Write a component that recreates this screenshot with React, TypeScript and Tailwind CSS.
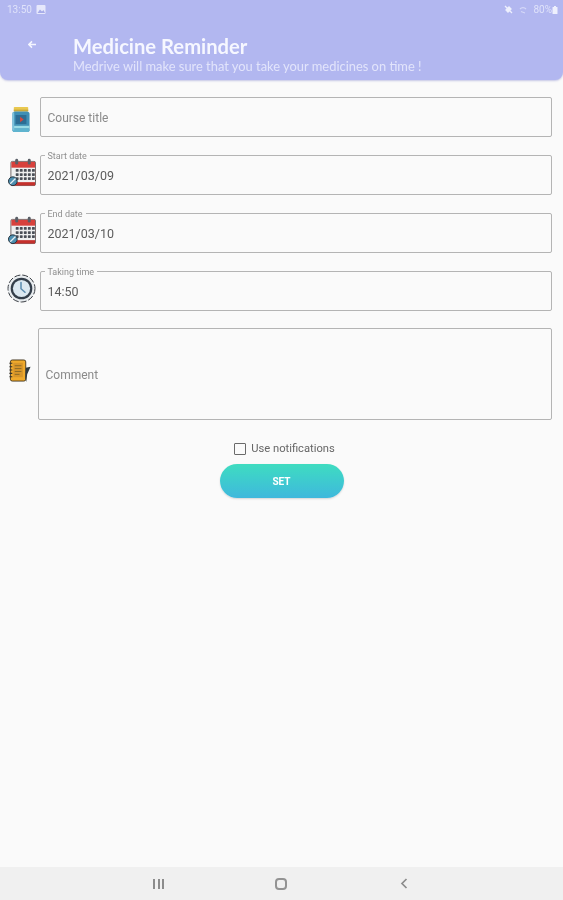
import React from "react";

function JarIcon() {
  return (
    <svg width="20" height="27" viewBox="0 0 22 30" className="ml-[3px] mt-[3px] shrink-0">
      <rect x="3" y="1" width="16" height="5" rx="1" fill="#e9c84f" />
      <rect x="3" y="4" width="16" height="2" fill="#c9a93c" />
      <rect x="1.5" y="6" width="19" height="23" rx="3" fill="#3f8fb5" />
      <rect x="1.5" y="22" width="19" height="3" fill="#9adbe6" />
      <rect x="1.5" y="25" width="19" height="4" rx="2" fill="#5fb4cf" />
      <rect x="5" y="10" width="12" height="10" fill="#2c6d94" />
      <path d="M10 12l4 3-4 3z" fill="#d9463a" />
      <rect x="1.5" y="7" width="2" height="20" fill="#7cc2dc" />
    </svg>
  );
}

function CalendarIcon() {
  const dots = [];
  for (let r = 0; r < 3; r++) {
    for (let c = 0; c < 5; c++) {
      dots.push(<rect key={`${r}-${c}`} x={8 + c * 4.2} y={11.5 + r * 4.2} width="3" height="2.8" rx="0.6" fill="#4a4e56" />);
    }
  }
  return (
    <svg width="28" height="29" viewBox="0 0 29 30" className="-mt-[3px] shrink-0">
      <rect x="3" y="3.5" width="25.500" height="25" rx="1.5" fill="#f0f0f0" stroke="#3a2a2a" strokeWidth="0.7" />
      <rect x="3.500" y="4" width="24.500" height="6" fill="#d8413c" />
      <rect x="3.500" y="25" width="24.500" height="3.500" fill="#c4302c" />
      <rect x="7.500" y="0.800" width="3" height="6" rx="1.5" fill="#5a5f67" />
      <rect x="20.500" y="0.800" width="3" height="6" rx="1.5" fill="#5a5f67" />
      {dots}
      <circle cx="5" cy="24" r="4.500" fill="#4d8fb0" stroke="#23303a" strokeWidth="1" />
      <path d="M2.300 26.700l5.500-5.500" stroke="#e6eef2" strokeWidth="1.300" />
    </svg>
  );
}

function ClockIcon() {
  return (
    <svg width="29" height="29" viewBox="0 0 29 29" className="-ml-[1px] -mt-[3px] shrink-0">
      <circle cx="14.5" cy="14.5" r="13.5" fill="#e8ecef" stroke="#3a3e44" strokeWidth="1" strokeDasharray="6 2" />
      <circle cx="14.5" cy="14.5" r="10.8" fill="#333e4a" />
      <circle cx="14.5" cy="14.5" r="8.6" fill="#dbe8f1" />
      <path d="M14 8.500v6.200l4 3.500" fill="none" stroke="#5a8bae" strokeWidth="1.500" strokeLinecap="round" />
    </svg>
  );
}

function NotebookIcon() {
  return (
    <svg width="22" height="24" viewBox="0 0 22 25" className="shrink-0">
      <rect x="1" y="1" width="16" height="22" rx="2" fill="#efaa2c" stroke="#3a2c12" strokeWidth="0.9" />
      <rect x="4" y="4" width="10" height="15" fill="#d8962a" />
      <path d="M5.500 7h7M5.500 10h7M5.500 13h7M5.500 16h5" stroke="#8a6a26" strokeWidth="1" />
      <path d="M0 4.500h3M0 8h3M0 11.500h3M0 15h3M0 18.500h3" stroke="#33302c" strokeWidth="1.100" />
      <path d="M17 9l5-1-3.500 8-1 8-1-4z" fill="#2f3a40" />
    </svg>
  );
}

function Field({ icon, label, value }: { icon: React.ReactNode; label?: string; value: string }) {
  return (
    <div className="flex h-10">
      <div className="flex w-10 shrink-0 items-start pl-2 pt-[6px]">{icon}</div>
      <div className="relative flex h-10 flex-1 items-center rounded-[2px] border-[1.500px] border-[#b4b4b4] px-[6.500px] pt-[2px]">
        {label && (
          <span className="absolute left-[3.500px] top-[-5px] bg-[#fafafa] px-[3px] text-[9px] leading-[11px] text-[#8f8f8f]">
            {label}
          </span>
        )}
        {label ? (
          <span className="text-[12.500px] text-[#5c5c5c]">{value}</span>
        ) : (
          <span className="text-[12px] text-[#8a8a8a]">{value}</span>
        )}
      </div>
    </div>
  );
}

export default function App() {
  return (
    <div className="flex h-[900px] w-[563px] flex-col overflow-hidden bg-[#fafafa] font-['Roboto',sans-serif] blur-[0.5px]">
      <header className="flex h-20 shrink-0 flex-col rounded-b-[8px] bg-[#b2b7f0] shadow-[0_1px_2px_rgba(120,125,200,0.4)]">
        <div className="flex h-[18px] items-center justify-between pl-[7px] pr-[5px] pt-[1px] text-[10px] text-[#dfe2fa]">
          <div className="flex items-center gap-[4px]">
            <span>13:50</span>
            <svg width="10" height="9" viewBox="0 0 9 9">
              <rect width="9" height="9" rx="1" fill="#e6e8fb" />
              <path d="M1 8l2.500-3.500 2 2L7 5l1.500 3z" fill="#a6abe8" />
            </svg>
          </div>
          <div className="flex items-center gap-[6px]">
            <svg width="9" height="9" viewBox="0 0 9 9">
              <path d="M1 1l7 7M2 5l3-3 2 2-3 3z" stroke="#eef0fd" strokeWidth="1.300" fill="#eef0fd" />
            </svg>
            <svg width="8" height="8" viewBox="0 0 8 8">
              <path d="M1 3a4 4 0 0 1 6 0M2 5.500l4 1.500" stroke="#d5d8f8" strokeWidth="1.200" fill="none" />
            </svg>
            <span>80%</span>
            <svg width="6" height="8" viewBox="0 0 5 8" className="-ml-[6px]">
              <rect y="1" width="5" height="7" rx="0.5" fill="#eef0fd" />
              <rect x="1.500" width="2" height="1" fill="#eef0fd" />
            </svg>
          </div>
        </div>
        <div className="flex">
          <div className="flex w-[73px] shrink-0 justify-start pl-[28px] pt-[22px]">
            <svg width="8" height="9" viewBox="0 0 9 9">
              <path d="M4.500 1L1 4.500 4.500 8M1.500 4.500H9" stroke="#f5f6ff" strokeWidth="1.700" fill="none" />
            </svg>
          </div>
          <div className="flex flex-col pt-[18px]">
            <span className="font-['Lato',sans-serif] text-[20.200px] font-bold leading-[20px] text-[#f6f7ff]">Medicine Reminder</span>
            <span className="mt-[3px] font-['Lato',sans-serif] text-[12.900px] leading-[14px] text-[#e2e4fb]">
              Medrive will make sure that you take your medicines on time !
            </span>
          </div>
        </div>
      </header>

      <main className="flex flex-1 flex-col pr-[11px] pt-[17px]">
        <div className="flex flex-col gap-[18px]">
          <Field icon={<JarIcon />} value="Course title" />
          <Field icon={<CalendarIcon />} label="Start date" value="2021/03/09" />
          <Field icon={<CalendarIcon />} label="End date" value="2021/03/10" />
          <Field icon={<ClockIcon />} label="Taking time" value="14:50" />
        </div>
        <div className="mt-[17px] flex h-[92px]">
          <div className="flex w-[38px] shrink-0 items-start pl-[9px] pt-[31px]">
            <NotebookIcon />
          </div>
          <div className="flex h-full flex-1 items-center rounded-[2px] border-[1.500px] border-[#b4b4b4] px-[6.500px] pt-[1px]">
            <span className="text-[12px] text-[#8a8a8a]">Comment</span>
          </div>
        </div>
        <div className="mt-[22px] flex items-center justify-center gap-[5px] pl-[17px]">
          <span className="h-3 w-3 rounded-[1px] border-[1.500px] border-[#6a6a6a]" />
          <span className="text-[11.200px] leading-[14px] text-[#666666]">Use notifications</span>
        </div>
        <div className="mt-[8px] flex justify-center pl-[11px]">
          <button className="h-[34px] w-[124px] rounded-full bg-gradient-to-b from-[#3fdcc0] to-[#3fb8dc] text-[10px] font-bold text-white shadow-[0_1px_2px_rgba(0,0,0,0.15)]">
            SET
          </button>
        </div>
      </main>

      <nav className="flex h-[33px] shrink-0 items-center bg-[#f0f0f0] pl-[153px]">
        <div className="flex h-[10px] w-[11px] justify-between">
          <span className="h-full w-[2px] bg-[#8c8c8c]" />
          <span className="h-full w-[2px] bg-[#8c8c8c]" />
          <span className="h-full w-[2px] bg-[#8c8c8c]" />
        </div>
        <span className="ml-[111px] h-3 w-3 rounded-[4px] border-2 border-[#939393]" />
        <svg width="8" height="11" viewBox="0 0 8 11" className="ml-[113px]">
          <path d="M6.500 1L2 5.500 6.500 10" fill="none" stroke="#8c8c8c" strokeWidth="1.700" />
        </svg>
      </nav>
    </div>
  );
}
